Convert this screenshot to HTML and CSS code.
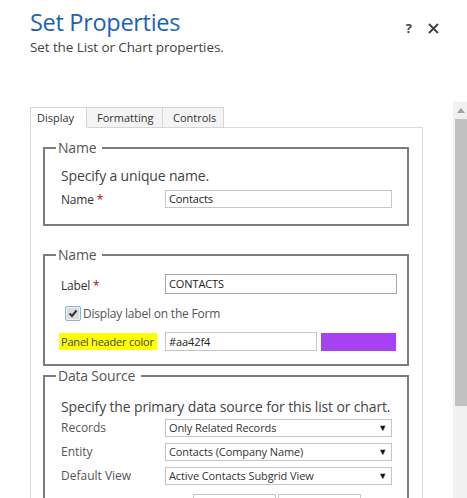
FILE: index.html
```html
<!DOCTYPE html>
<html>
<head>
<meta charset="utf-8">
<link rel="stylesheet" href="styles.css">
</head>
<body>
<div class="dialog">
  <div class="header">
    <div class="titles">
      <div class="title">Set Properties</div>
      <div class="subtitle">Set the List or Chart properties.</div>
    </div>
    <div class="actions">
      <span class="help">?</span>
      <svg class="close" width="11" height="11" viewBox="0 0 11 11"><path d="M1 1 L10 10 M10 1 L1 10" stroke="#444" stroke-width="2" fill="none"/></svg>
    </div>
  </div>
  <div class="main">
    <div class="content">
      <div class="tabs">
        <div class="tab active">Display</div>
        <div class="tab">Formatting</div>
        <div class="tab">Controls</div>
      </div>
      <div class="panel">
        <fieldset class="fs fs1">
          <legend>Name</legend>
          <div class="desc">Specify a unique name.</div>
          <div class="row">
            <span class="lbl">Name <span class="req">*</span></span>
            <span class="input w227">Contacts</span>
          </div>
        </fieldset>
        <fieldset class="fs fs2">
          <legend>Name</legend>
          <div class="row">
            <span class="lbl">Label <span class="req">*</span></span>
            <span class="input dark w232">CONTACTS</span>
          </div>
          <div class="check-row">
            <span class="checkbox"><svg width="10" height="9" viewBox="0 0 10 9"><path d="M1.5 4.5 L4 7 L8.5 1.5" stroke="#333" stroke-width="2" fill="none"/></svg></span>
            <span class="check-text">Display label on the Form</span>
          </div>
          <div class="row color-row">
            <span class="lbl"><span class="hl">Panel header color</span></span>
            <span class="input w152">#aa42f4</span>
            <span class="swatch"></span>
          </div>
        </fieldset>
        <fieldset class="fs fs3">
          <legend>Data Source</legend>
          <div class="desc">Specify the primary data source for this list or chart.</div>
          <div class="row sel-row">
            <span class="lbl gray">Records</span>
            <span class="input select w227"><span>Only Related Records</span><span class="arrow">▼</span></span>
          </div>
          <div class="row sel-row">
            <span class="lbl gray">Entity</span>
            <span class="input select w227"><span>Contacts (Company Name)</span><span class="arrow">▼</span></span>
          </div>
          <div class="row sel-row">
            <span class="lbl gray">Default View</span>
            <span class="input select w227"><span>Active Contacts Subgrid View</span><span class="arrow">▼</span></span>
          </div>
          <div class="btn-row">
            <span class="btn"></span>
            <span class="btn"></span>
          </div>
        </fieldset>
      </div>
    </div>
    <div class="scroll">
      <div class="scroll-up"><svg width="8" height="5" viewBox="0 0 8 5"><path d="M0 5 L4 0 L8 5 Z" fill="#a0a0a0"/></svg></div>
      <div class="thumb"></div>
    </div>
  </div>
</div>
</body>
</html>
```
FILE: styles.css
```css
html, body {
  margin: 0;
  padding: 0;
  background: #fff;
  height: 498px;
  overflow: hidden;
}
body {
  font-family: "Open Sans", "Noto Sans", sans-serif;
  color: #444;
}
.header {
  display: flex;
  justify-content: space-between;
  padding: 6px 28px 0 30px;
  height: 96px;
  box-sizing: border-box;
}
.title {
  font-size: 23.5px;
  line-height: 32px;
  color: #1a62b8;
  letter-spacing: -0.3px;
}
.subtitle {
  font-size: 13.5px;
  line-height: 18px;
  color: #444;
  letter-spacing: -0.1px;
}
.actions {
  display: flex;
  align-items: center;
  gap: 16px;
  height: 36px;
  padding-top: 4px;
}
.help {
  font-size: 13px;
  font-weight: bold;
  color: #444;
}
.main {
  display: flex;
  height: 402px;
}
.content {
  flex: 1;
  padding: 11px 30px 0 30px;
}
.tabs {
  display: flex;
  height: 21px;
  position: relative;
  z-index: 1;
}
.tab {
  box-sizing: border-box;
  height: 21px;
  border: 1px solid #d6d6d6;
  border-left: none;
  background: #f4f4f4;
  font-size: 11px;
  line-height: 19px;
  color: #333;
  padding: 0 10px;
}
.tab.active {
  background: #fff;
  border-left: 1px solid #d6d6d6;
  border-bottom-color: #fff;
  width: 57px;
  padding-left: 6px;
}
.tab:nth-child(2) { width: 76px; padding-left: 10px; }
.tab:nth-child(3) { width: 61px; padding-left: 10px; }
.panel {
  border: 1px solid #dcdcdc;
  margin-top: -1px;
  height: 400px;
  overflow: hidden;
}
.fs {
  border: 2px solid #7c7c7c;
  margin: 0 13px 0 12px;
  padding: 0 10px 0 16px;
  min-width: 0;
}
.fs legend {
  font-size: 14px;
  line-height: 20px;
  color: #555;
  padding: 0 6px 0 2px;
  margin-left: -5px;
  letter-spacing: -0.2px;
}
.fs1 { margin-top: 10px; padding-top: 8px; padding-bottom: 16px; }
.fs2 { margin-top: 19px; padding-top: 9px; padding-bottom: 13px; }
.fs3 { margin-top: 0; padding-top: 11px; padding-bottom: 0; }
.desc {
  font-size: 14px;
  line-height: 20px;
  color: #444;
  letter-spacing: -0.15px;
  white-space: nowrap;
}
.row {
  display: flex;
  align-items: flex-end;
  margin-top: 4px;
}
.fs2 .row:first-of-type { margin-top: 0; }
.lbl {
  width: 104px;
  flex: none;
  font-size: 12px;
  line-height: 16px;
  color: #333;
  letter-spacing: -0.2px;
  white-space: nowrap;
}
.lbl.gray { color: #555; align-self: center; letter-spacing: 0; }
.req { color: #c00000; }
.input {
  box-sizing: border-box;
  height: 18px;
  border: 1px solid #c6c6c6;
  font-size: 11px;
  line-height: 16px;
  padding: 0 3px;
  color: #222;
  white-space: nowrap;
  overflow: hidden;
  letter-spacing: -0.1px;
}
.input.dark { border-color: #a8a8a8; height: 20px; line-height: 18px; }
.w227 { width: 227px; }
.w232 { width: 232px; }
.w152 { width: 152px; height: 19px; line-height: 17px; }
.check-row {
  display: flex;
  align-items: center;
  height: 20px;
  margin-top: 9px;
  margin-left: 4px;
}
.checkbox {
  box-sizing: border-box;
  width: 16px;
  height: 15px;
  border: 1px solid #86b4e8;
  border-radius: 2px;
  background: #dcdcdc;
  box-shadow: inset 0 0 0 1px #f0f0f0;
  display: flex;
  align-items: center;
  justify-content: center;
  margin-right: 2px;
}
.check-text {
  font-size: 12px;
  color: #555;
  letter-spacing: -0.2px;
}
.color-row { margin-top: 9px; align-items: center; }
.hl {
  background: #ffff00;
  padding: 1px 3px 1px 2px;
  margin-left: -2px;
  color: #444;
  font-size: 11px;
  letter-spacing: -0.2px;
}
.swatch {
  width: 75px;
  height: 18px;
  background: #a742f2;
  margin-left: 4px;
}
.sel-row { margin-top: 6px; align-items: center; }
.fs3 .desc + .sel-row { margin-top: 2px; }
.select {
  display: flex;
  justify-content: space-between;
  align-items: center;
  padding-right: 4px;
  color: #333;
}
.arrow {
  font-size: 9px;
  color: #111;
}
.btn-row {
  display: flex;
  gap: 2px;
  margin-top: 9px;
  margin-left: 132px;
}
.btn {
  width: 83px;
  height: 20px;
  box-sizing: border-box;
  border: 1px solid #c6c6c6;
}
.scroll {
  width: 14px;
  background: #f0f0f0;
  margin-top: 6px;
  display: flex;
  flex-direction: column;
  align-items: flex-end;
}
.scroll-up {
  height: 17px;
  width: 12px;
  display: flex;
  align-items: center;
  justify-content: center;
}
.thumb {
  width: 12px;
  height: 287px;
  background: #c1c1c1;
}
```
